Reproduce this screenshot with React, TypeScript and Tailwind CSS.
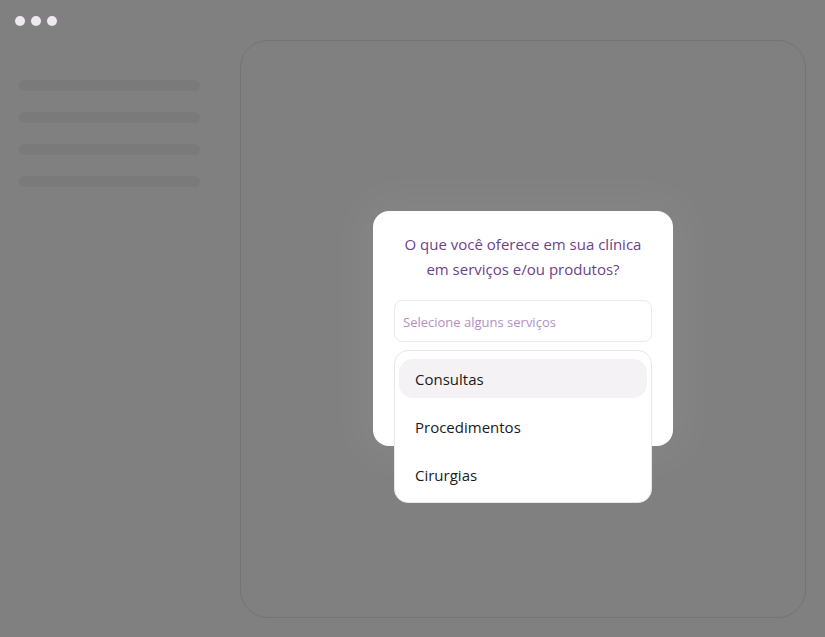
import { useState } from 'react';

const services = ['Consultas', 'Procedimentos', 'Cirurgias'];

export default function App() {
  const [selected, setSelected] = useState(0);

  return (
    <div className="w-[825px] h-[637px] bg-[#808080] flex overflow-hidden" style={{ fontFamily: '"Open Sans", "Noto Sans", sans-serif' }}>
      <aside className="w-[240px] shrink-0 flex flex-col">
        <div className="flex gap-[6px] pl-[15px] pt-4">
          <span className="w-2.5 h-2.5 rounded-full bg-[#f1e7f1]" />
          <span className="w-2.5 h-2.5 rounded-full bg-[#f1e7f1]" />
          <span className="w-2.5 h-2.5 rounded-full bg-[#f1e7f1]" />
        </div>
        <div className="flex flex-col gap-[21px] pl-[19px] pt-[54px]">
          {[0, 1, 2, 3].map((i) => (
            <div key={i} className="w-[181px] h-[11px] rounded-full bg-[#7a7a7a]" />
          ))}
        </div>
      </aside>

      <main className="mt-10 mb-[19px] mr-[19px] flex-1 rounded-[28px] border border-[#747474] flex justify-center">
        <div className="mt-[170px] h-fit">
          <div className="w-[300px] bg-white rounded-2xl pt-[21px] pb-[104px] px-[21px] shadow-[0_0_40px_12px_rgba(255,255,255,0.05)] relative">
            <p className="text-center text-[15px] leading-[25px] text-[#6d3f8c]">
              O que você oferece em sua clínica
              <br />
              em serviços e/ou produtos?
            </p>
            <div className="mt-[18px] h-[42px] rounded-lg border border-[#ece9ee] flex items-center pl-2 pt-[3px] text-[13px] text-[#b48fc4]">
              Selecione alguns serviços
            </div>
            <ul className="absolute left-[21px] top-[139px] w-[258px] bg-white rounded-[14px] border border-[#e8e6ea] px-1 pt-2 pb-2 flex flex-col gap-[9px]">
              {services.map((s, i) => (
                <li
                  key={s}
                  onMouseEnter={() => setSelected(i)}
                  className={
                    'h-[39px] rounded-[14px] flex items-center px-4 pt-[2px] text-[15px] text-[#1a1a1a] cursor-pointer ' +
                    (i === selected ? 'bg-[#f4f2f5]' : '')
                  }
                >
                  {s}
                </li>
              ))}
            </ul>
          </div>
        </div>
      </main>
    </div>
  );
}
